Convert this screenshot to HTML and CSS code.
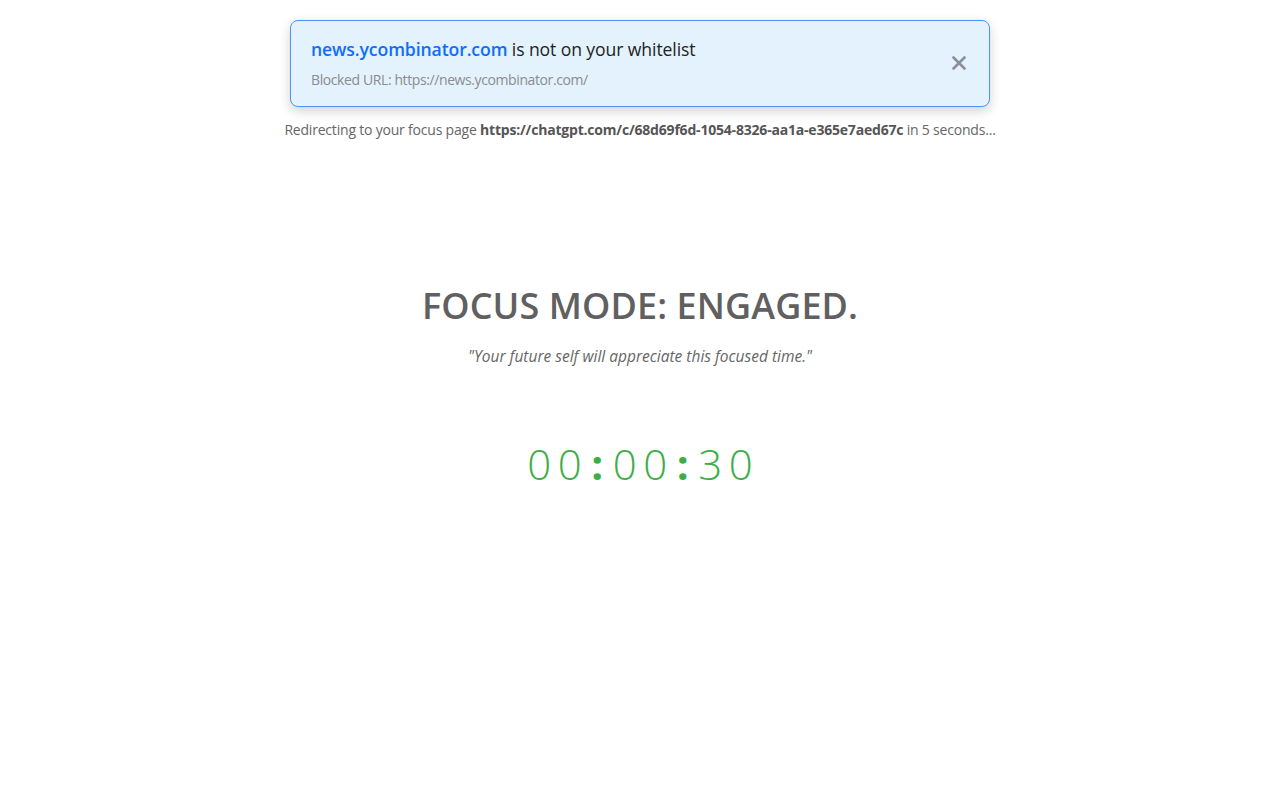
FILE: index.html
```html
<!DOCTYPE html>
<html lang="en">
<head>
    <meta charset="UTF-8">
    <meta name="viewport" content="width=device-width, initial-scale=1.0">
    <title>Focus Mode</title>
    <link rel="stylesheet" href="styles.css">
</head>
<body>
    <div class="notice-wrap">
        <div class="notice">
            <div class="notice-text">
                <div class="notice-title"><span class="domain">news.ycombinator.com</span> is not on your whitelist</div>
                <div class="notice-url">Blocked URL: https://news.ycombinator.com/</div>
            </div>
            <button class="close" aria-label="Close">
                <svg width="14" height="14" viewBox="0 0 14 14"><path d="M1.5 1.5 L12.5 12.5 M12.5 1.5 L1.5 12.5" stroke="#8a8f96" stroke-width="2.6" stroke-linecap="round"/></svg>
            </button>
        </div>
        <p class="redirect">Redirecting to your focus page <b>https://chatgpt.com/c/68d69f6d-1054-8326-aa1a-e365e7aed67c</b> in 5 seconds...</p>
    </div>

    <div class="focus">
        <h1>FOCUS MODE: ENGAGED.</h1>
        <p class="quote">"Your future self will appreciate this focused time."</p>
        <div class="timer">00<span class="sep">:</span>00<span class="sep">:</span>30</div>
    </div>
</body>
</html>
```

FILE: styles.css
```css
body {
    margin: 0;
    font-family: "Open Sans", "Noto Sans", sans-serif;
    background: #fff;
    color: #666;
}
.notice-wrap {
    display: flex;
    flex-direction: column;
    align-items: center;
    padding-top: 20px;
}
.notice {
    box-sizing: border-box;
    width: 700px;
    height: 87px;
    display: flex;
    align-items: center;
    justify-content: space-between;
    padding: 0 20px 0 20px;
    background: #e3f2fd;
    border: 1px solid #4d94f2;
    border-radius: 8px;
    box-shadow: 0 4px 12px rgba(0, 0, 0, 0.18);
}
.notice-title { font-size: 17.6px; color: #222; letter-spacing: -0.1px; margin-top: -2px; }
.notice-title .domain { color: #0d6efd; font-weight: 600; }
.notice-url { margin-top: 9px; font-size: 14px; color: #8c8c8c; letter-spacing: -0.4px; }
.close {
    background: none;
    border: 0;
    padding: 4px;
    margin: -2px -1px 0 0;
    cursor: pointer;
    display: flex;
}
.redirect {
    margin: 13px 0 0;
    font-size: 14px;
    color: #666;
    letter-spacing: -0.2px;
}
.redirect b { color: #555; font-weight: 700; }
.focus {
    display: flex;
    flex-direction: column;
    align-items: center;
    padding-top: 142px;
}
.focus h1 {
    margin: 0;
    font-size: 36px;
    font-weight: 600;
    color: #606060;
    letter-spacing: 0.1px;
}
.quote {
    margin: 15px 0 0;
    font-size: 15.5px;
    font-style: italic;
    color: #666;
}
.timer {
    margin-top: 68px;
    padding-left: 6.5px;
    font-size: 42px;
    font-weight: 300;
    color: #3cae47;
    letter-spacing: 6.5px;
}
.timer .sep { font-weight: 700; margin: 0 3px; }
```
